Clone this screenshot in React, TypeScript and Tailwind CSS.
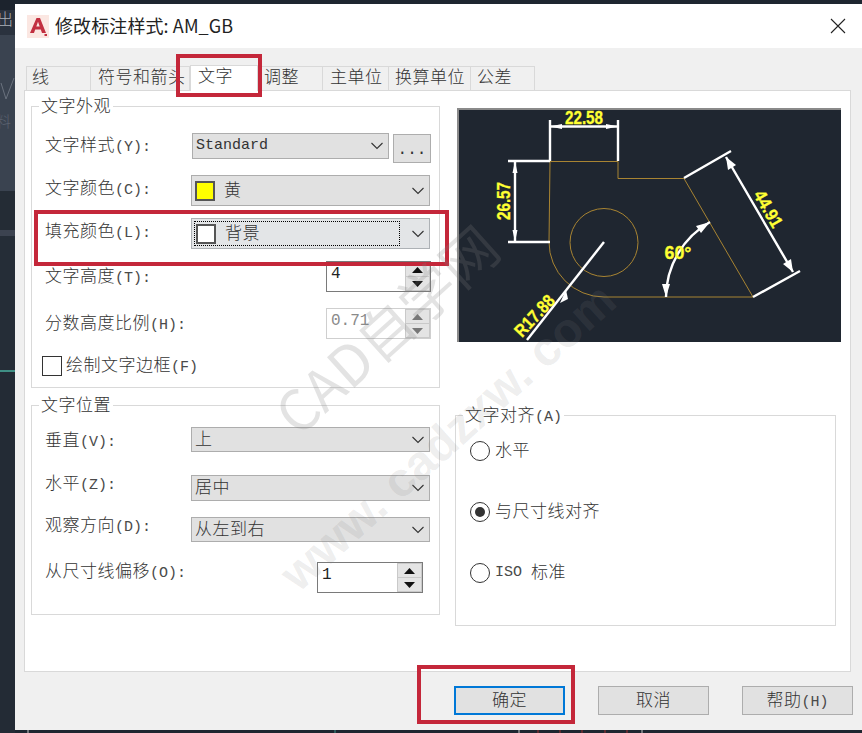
import type { ReactNode } from 'react';

const MONO = "[font-family:'Liberation_Mono','Noto_Sans_CJK_SC',monospace]";

function Txt({ zh, en }: { zh: string; en?: string }) {
  return (
    <span className="inline-block whitespace-nowrap pt-[2px]">
      <span className="text-[17px] tracking-[0.5px]">{zh}</span>
      {en && <span className="text-[15px] text-[#4a4a4a]">{en}</span>}
    </span>
  );
}

function Chevron() {
  return (
    <svg width="14" height="8" viewBox="0 0 14 8" className="shrink-0" fill="none" stroke="#333" strokeWidth="1.1">
      <path d="M1.5 1 L7 6.5 L12.5 1" />
    </svg>
  );
}

function Combo({ className, children }: { className: string; children: ReactNode }) {
  return (
    <div className={`flex items-center justify-between bg-[#e1e1e1] border border-[#adadad] pl-[3px] pr-[4px] ${className}`}>
      <div className="flex items-center">{children}</div>
      <Chevron />
    </div>
  );
}

function Swatch({ color }: { color: string }) {
  return <span className={`block w-[20px] h-[20px] border-[2px] border-[#555] mr-[9px] ${color}`} />;
}

function Spin({ value, className, disabled }: { value: string; className: string; disabled?: boolean }) {
  const arrow = disabled ? '#777' : '#111';
  return (
    <div className={`flex bg-white border ${disabled ? 'border-[#cfcfcf]' : 'border-[#7a7a7a]'} ${className}`}>
      <div className={`flex-1 pl-[4px] pt-[2px] text-[16px] leading-[20px] ${disabled ? 'text-[#8a8a8a]' : 'text-[#222]'}`}>{value}</div>
      <div className="w-[25px] flex flex-col gap-[1px] p-[1px] bg-[#c9c9c9]">
        <div className="flex-1 bg-[#e4e4e4] flex items-center justify-center">
          <svg width="11" height="6" viewBox="0 0 11 6"><path d="M5.5 0 L11 6 H0 Z" fill={arrow} /></svg>
        </div>
        <div className="flex-1 bg-[#e4e4e4] flex items-center justify-center">
          <svg width="11" height="6" viewBox="0 0 11 6"><path d="M0 0 H11 L5.5 6 Z" fill={arrow} /></svg>
        </div>
      </div>
    </div>
  );
}

function Legend({ zh, en }: { zh: string; en?: string }) {
  return (
    <div className="-mt-[10px] ml-[7px] px-[2px] w-fit h-[20px] leading-[18px] bg-white">
      <Txt zh={zh} en={en} />
    </div>
  );
}

function Radio({ checked, children }: { checked?: boolean; children: ReactNode }) {
  return (
    <div className="flex items-center h-[20px] gap-[5px]">
      <span className="w-[20px] h-[20px] rounded-full border border-[#333] flex items-center justify-center">
        {checked && <span className="w-[10px] h-[10px] rounded-full bg-[#333]" />}
      </span>
      <span className="flex items-center">{children}</span>
    </div>
  );
}

function Preview() {
  return (
    <div className="w-[384px] h-[234px] border-l-[2px] border-t-[2px] border-[#8a8a8a]">
      <svg viewBox="459 110 382 232" className="block w-[382px] h-[232px] bg-[#1f2630]">
        <g fill="none" stroke="#a88432" strokeWidth="1">
          <path d="M550 161.5 H618 V178.5 H684 L753 297 H604 A55 55 0 0 1 549 242 Z" />
          <circle cx="604" cy="242.5" r="34" />
        </g>
        <g fill="none" stroke="#fff" strokeWidth="2.4">
          <path d="M550 120 V161 M618 120 V161 M550 126.5 H618" />
          <path d="M508 161 H550 M508 242 H550 M515 161 V242" />
          <path d="M684 178 L731 151 M753 297 L800 271 M726 157 L793 272" />
          <path d="M710 222 A87 87 0 0 0 666 297" />
          <path d="M604 242 L527 340" />
        </g>
        <g fill="#fff">
          <path d="M550 126.5 L562 124 V129 Z M618 126.5 L606 124 V129 Z" />
          <path d="M515 161 L512.5 173 H517.5 Z M515 242 L512.5 230 H517.5 Z" />
          <path d="M726 157 L728 170 L736 165 Z M793 272 L791 259 L783 264 Z" />
          <path d="M710 222 L696 226 L701 233 Z M666 297 L662 284 L670 284 Z" />
          <path d="M566 290 L560 303 L568 299 Z" />
        </g>
        <g fill="#ffff33" stroke="#ffff33" strokeWidth="0.3" fontWeight="700" style={{ fontFamily: "'Liberation Sans', sans-serif" }} fontSize="18" textAnchor="middle">
          <text x="584" y="124" textLength="38" lengthAdjust="spacingAndGlyphs">22.58</text>
          <text transform="translate(510 201) rotate(-90)" textLength="38" lengthAdjust="spacingAndGlyphs">26.57</text>
          <text transform="translate(763 212) rotate(60)" textLength="40" lengthAdjust="spacingAndGlyphs">44.91</text>
          <text x="678" y="259" textLength="27" lengthAdjust="spacingAndGlyphs">60°</text>
          <text transform="translate(539 320) rotate(-47)" textLength="50" lengthAdjust="spacingAndGlyphs">R17.88</text>
        </g>
      </svg>
    </div>
  );
}

export default function App() {
  return (
    <div className={`relative w-[862px] h-[733px] overflow-hidden flex bg-[#1e2630] text-[#333] font-light ${MONO}`}>
      {/* 左侧背景 */}
      <div className="w-[15px] shrink-0 flex flex-col text-[#aab0b8]">
        <div className="h-[10px] bg-[#1c232d]" />
        <div className="h-[25px] bg-[#2a323e] text-[16px] leading-[22px] -indent-[3px] overflow-hidden">出</div>
        <div className="h-[156px] bg-[#3a4350] pt-[42px] text-[#5c6470] text-[15px] leading-[18px] -indent-[4px] overflow-hidden">
          <svg width="15" height="24" viewBox="0 0 15 24" fill="none" stroke="#6a727e" strokeWidth="1" className="block">
            <path d="M1 6 L6 22 L14 1" />
          </svg>
          <div className="h-[18px] mt-[14px]">料</div>
        </div>
        <div className="h-[39px] bg-[#242c35]" />
        <div className="h-[6px] bg-[#3c4350]" />
        <div className="h-[134px] bg-[#252d37]" />
        <div className="h-[2px] bg-[#3f8f85]" />
        <div className="flex-1 bg-[#232b35]" />
      </div>

      {/* 对话框 */}
      <div className="flex-1 mt-[4px] flex flex-col min-w-0">
        <div className="h-[44px] bg-white flex items-center pl-[12px] pr-[16px] shrink-0">
          <svg width="22" height="23" viewBox="0 0 22 23" className="mr-[6px]">
            <rect width="22" height="23" fill="#fbe7e2" />
            <path d="M3 18 L9.5 3 H13 L19 18 H15 L13.8 14.5 H8.2 L7 18 Z M9.3 11.5 H12.7 L11 6.8 Z" fill="#c22f40" fillRule="evenodd" />
            <rect x="17.5" y="19" width="2.5" height="2" fill="#c22f40" />
          </svg>
          <span className="pb-[2px] text-[18px] tracking-[0.1px] font-normal text-[#222] [font-family:'Noto_Sans_CJK_SC','Noto_Sans',sans-serif]">修改标注样式: AM_GB</span>
          <svg width="16" height="16" viewBox="0 0 16 16" className="ml-auto" stroke="#222" strokeWidth="1.1">
            <path d="M1 1 L15 15 M15 1 L1 15" />
          </svg>
        </div>

        <div className="flex-1 bg-[#f0f0f0] px-[9px] pt-[18px] min-h-0">
          {/* 选项卡 */}
          <div className="flex items-end h-[24px] ml-[2px]">
            <div className="w-[65px] h-[24px] bg-[#f0f0f0] border border-b-0 border-[#d9d9d9] pl-[5px] leading-[20px]"><Txt zh="线" /></div>
            <div className="w-[99px] h-[24px] bg-[#f0f0f0] border border-l-0 border-b-0 border-[#d9d9d9] pl-[7px] leading-[20px] whitespace-nowrap overflow-hidden"><Txt zh="符号和箭头" /></div>
            <div className="relative w-[68px] h-[26px] -mb-[1px] bg-white border border-b-0 border-[#d9d9d9] pl-[7px] leading-[20px]"><Txt zh="文字" /></div>
            <div className="w-[65px] h-[24px] bg-[#f0f0f0] border border-l-0 border-b-0 border-[#d9d9d9] pl-[6px] leading-[20px]"><Txt zh="调整" /></div>
            <div className="w-[66px] h-[24px] bg-[#f0f0f0] border border-l-0 border-b-0 border-[#d9d9d9] pl-[7px] leading-[20px]"><Txt zh="主单位" /></div>
            <div className="w-[82px] h-[24px] bg-[#f0f0f0] border border-l-0 border-b-0 border-[#d9d9d9] pl-[6px] leading-[20px] whitespace-nowrap"><Txt zh="换算单位" /></div>
            <div className="w-[64px] h-[24px] bg-[#f0f0f0] border border-l-0 border-b-0 border-[#d9d9d9] pl-[6px] leading-[20px]"><Txt zh="公差" /></div>
          </div>

          {/* 内容面板 */}
          <div className="h-[582px] mr-[2px] bg-white border border-[#d9d9d9] flex pl-[6px] pt-[15px]">
            <div className="w-[409px] shrink-0">
              <div className="h-[282px] border border-[#d9d9d9] pr-[8px]">
                <Legend zh="文字外观" />
                <div className="pl-[13px]">
                  <div className="flex items-start mt-[16px] h-[26px]">
                    <div className="flex-1 leading-[24px]"><Txt zh="文字样式" en="(Y):" /></div>
                    <Combo className="w-[197px] h-[26px] text-[15px]">Standard</Combo>
                    <div className="w-[38px] h-[29px] ml-[4px] mt-[1px] bg-[#e1e1e1] border border-[#adadad] text-center text-[16px] leading-[30px]">...</div>
                  </div>
                  <div className="flex items-center mt-[16px] h-[31px]">
                    <div className="flex-1 pb-[3px]"><Txt zh="文字颜色" en="(C):" /></div>
                    <Combo className="w-[239px] h-[31px] mr-[1px]"><Swatch color="bg-[#ffff00]" /><Txt zh="黄" /></Combo>
                  </div>
                  <div className="flex items-center mt-[12px] h-[31px]">
                    <div className="flex-1 pb-[3px]"><Txt zh="填充颜色" en="(L):" /></div>
                    <div className="w-[239px] h-[31px] mr-[1px] flex items-center bg-[#e3e5e7] border border-[#adb1b5] pl-[2px]">
                      <div className="w-[206px] h-[25px] flex items-center pl-[1px] border border-dotted border-black">
                        <Swatch color="bg-white" /><Txt zh="背景" />
                      </div>
                      <div className="flex-1 flex justify-center pl-[6px]"><Chevron /></div>
                    </div>
                  </div>
                  <div className="flex items-center mt-[12px] h-[31px]">
                    <div className="flex-1"><Txt zh="文字高度" en="(T):" /></div>
                    <Spin value="4" className="w-[105px] h-[31px]" />
                  </div>
                  <div className="flex items-center mt-[16px] h-[31px]">
                    <div className="flex-1"><Txt zh="分数高度比例" en="(H):" /></div>
                    <Spin value="0.71" disabled className="w-[105px] h-[31px]" />
                  </div>
                  <div className="flex items-center mt-[17px] h-[20px] -ml-[3px] gap-[4px]">
                    <span className="w-[20px] h-[20px] border border-[#333] bg-white" />
                    <Txt zh="绘制文字边框" en="(F)" />
                  </div>
                </div>
              </div>

              <div className="h-[210px] mt-[17px] border border-[#d9d9d9] pr-[8px]">
                <Legend zh="文字位置" />
                <div className="pl-[13px]">
                  <div className="flex items-center mt-[11px] h-[25px]">
                    <div className="flex-1 pt-[3px]"><Txt zh="垂直" en="(V):" /></div>
                    <Combo className="w-[239px] h-[25px] mr-[1px]"><Txt zh="上" /></Combo>
                  </div>
                  <div className="flex items-center mt-[23px] h-[26px]">
                    <div className="flex-1 pb-[8px]"><Txt zh="水平" en="(Z):" /></div>
                    <Combo className="w-[239px] h-[26px] mr-[1px]"><Txt zh="居中" /></Combo>
                  </div>
                  <div className="flex items-center mt-[16px] h-[25px]">
                    <div className="flex-1 pb-[7px]"><Txt zh="观察方向" en="(D):" /></div>
                    <Combo className="w-[239px] h-[25px] mr-[1px]"><Txt zh="从左到右" /></Combo>
                  </div>
                  <div className="flex items-center mt-[20px] h-[31px]">
                    <div className="flex-1 pb-[12px]"><Txt zh="从尺寸线偏移" en="(O):" /></div>
                    <Spin value="1" className="w-[106px] h-[31px] mr-[8px]" />
                  </div>
                </div>
              </div>
            </div>

            <div className="ml-[15px] flex-1 min-w-0">
              <div className="ml-[2px] mt-[2px]"><Preview /></div>
              <div className="w-[381px] h-[211px] mt-[73px] border border-[#d9d9d9]">
                <Legend zh="文字对齐" en="(A)" />
                <div className="pl-[14px] mt-[15px] flex flex-col gap-[41px]">
                  <Radio><Txt zh="水平" /></Radio>
                  <Radio checked><Txt zh="与尺寸线对齐" /></Radio>
                  <Radio><span className="text-[15px] text-[#4a4a4a]">ISO</span><span className="w-[9px]" /><Txt zh="标准" /></Radio>
                </div>
              </div>
            </div>
          </div>

          {/* 底部按钮 */}
          <div className="flex justify-end gap-[33px] mt-[14px]">
            <div className="w-[111px] h-[29px] bg-[#e1e1e1] border-[2px] border-[#0078d7] flex items-center justify-center"><Txt zh="确定" /></div>
            <div className="w-[111px] h-[29px] bg-[#e1e1e1] border border-[#adadad] flex items-center justify-center"><Txt zh="取消" /></div>
            <div className="w-[111px] h-[29px] bg-[#e1e1e1] border border-[#adadad] flex items-center justify-center"><Txt zh="帮助" en="(H)" /></div>
          </div>
        </div>

        <svg viewBox="0 0 847 3" className="block w-[847px] h-[3px] shrink-0" strokeWidth="1">
          <path d="M13 0 V3 M504 0 V3 M627 0 V3" stroke="#c9c9c9" />
          <path d="M320 0 V3" stroke="#3f8f85" />
          <path d="M523 0 V3 M545 0 V3 M567 0 V3 M590 0 V3 M612 0 V3" stroke="#a03030" />
        </svg>
      </div>

      {/* 红色标注框 */}
      <div className="absolute left-[176px] top-[54px] w-[86px] h-[43px] border-[4px] border-[#c4273a]" />
      <div className="absolute left-[34px] top-[210px] w-[415px] h-[56px] border-[4px] border-[#c4273a]" />
      <div className="absolute left-[417px] top-[665px] w-[158px] h-[59px] border-[4px] border-[#c4273a]" />

      {/* 水印 */}
      <div className="absolute left-[385px] top-[328px] -translate-x-1/2 -translate-y-1/2 -rotate-[42deg] whitespace-nowrap text-[56px] text-[#808080]/22 font-normal pointer-events-none [font-family:'Noto_Sans_CJK_SC',sans-serif]">CAD自学网</div>
      <div className="absolute left-[448px] top-[437px] -translate-x-1/2 -translate-y-1/2 -rotate-[42deg] whitespace-nowrap text-[48px] font-bold text-[#808080]/15 pointer-events-none [font-family:'Liberation_Sans',sans-serif]">www. cadzxw. com</div>
    </div>
  );
}
